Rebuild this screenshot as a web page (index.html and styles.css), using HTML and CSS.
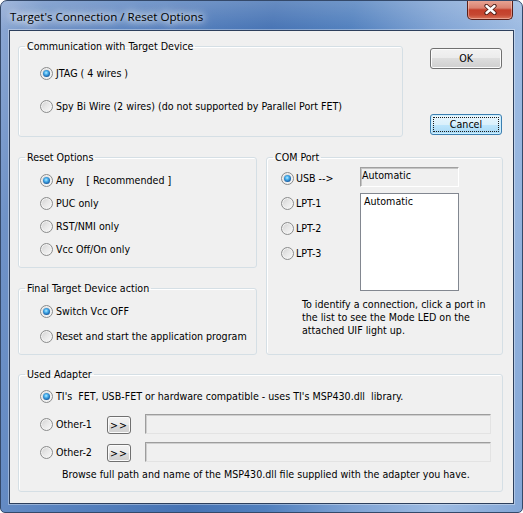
FILE: index.html
```html
<!DOCTYPE html>
<html>
<head>
<meta charset="utf-8">
<title>Target's Connection / Reset Options</title>
<link rel="stylesheet" href="styles.css">
</head>
<body>
<div class="window">
  <div class="titlebar">
    <div class="title">Target's Connection / Reset Options</div>
    <div class="close">
      <svg width="13" height="11" viewBox="0 0 13 11">
        <path d="M2.5 2 L10.5 9 M10.5 2 L2.5 9" stroke="#4a1c16" stroke-width="4.2" stroke-linecap="round" fill="none"/>
        <path d="M2.5 2 L10.5 9 M10.5 2 L2.5 9" stroke="#ffffff" stroke-width="2.4" stroke-linecap="round" fill="none"/>
      </svg>
    </div>
  </div>
  <div class="client">
    <div class="row-top">
      <fieldset class="group g-comm">
        <legend>Communication with Target Device</legend>
        <div class="comm-body">
          <div class="opt"><span class="radio on"></span>JTAG ( 4 wires )</div>
          <div class="opt"><span class="radio"></span>Spy Bi Wire (2 wires) (do not supported by Parallel Port FET)</div>
        </div>
      </fieldset>
      <div class="buttons">
        <div class="btn">OK</div>
        <div class="btn default">Cancel</div>
      </div>
    </div>
    <div class="row-mid">
      <div class="left-col">
        <fieldset class="group">
          <legend>Reset Options</legend>
          <div class="reset-body">
            <div class="opt"><span class="radio on"></span>Any<span class="rec">[ Recommended ]</span></div>
            <div class="opt"><span class="radio"></span>PUC only</div>
            <div class="opt"><span class="radio"></span>RST/NMI only</div>
            <div class="opt"><span class="radio"></span>Vcc Off/On only</div>
          </div>
        </fieldset>
        <fieldset class="group">
          <legend>Final Target Device action</legend>
          <div class="final-body">
            <div class="opt"><span class="radio on"></span>Switch Vcc OFF</div>
            <div class="opt"><span class="radio"></span>Reset and start the application program</div>
          </div>
        </fieldset>
      </div>
      <fieldset class="group g-com">
        <legend>COM Port</legend>
        <div class="com-body">
          <div class="com-top">
            <div class="com-radios">
              <div class="opt"><span class="radio on"></span>USB --&gt;</div>
              <div class="opt"><span class="radio"></span>LPT-1</div>
              <div class="opt"><span class="radio"></span>LPT-2</div>
              <div class="opt"><span class="radio"></span>LPT-3</div>
            </div>
            <div class="com-boxes">
              <div class="static-box">Automatic</div>
              <div class="listbox"><div class="item">Automatic</div></div>
            </div>
          </div>
          <p class="com-note">To identify a connection, click a port in<br>the list to see the Mode LED on the<br>attached UIF light up.</p>
        </div>
      </fieldset>
    </div>
    <fieldset class="group g-used">
      <legend>Used Adapter</legend>
      <div class="used-body">
        <div class="opt"><span class="radio on"></span>TI's&nbsp; FET, USB-FET or hardware compatible - uses TI's MSP430.dll&nbsp; library.</div>
        <div class="other first">
          <div class="opt other-opt"><span class="radio"></span>Other-1</div>
          <div class="sbtn">&gt;&gt;</div>
          <div class="edit"></div>
        </div>
        <div class="other second">
          <div class="opt other-opt"><span class="radio"></span>Other-2</div>
          <div class="sbtn">&gt;&gt;</div>
          <div class="edit"></div>
        </div>
        <div class="browse">Browse full path and name of the MSP430.dll file supplied with the adapter you have.</div>
      </div>
    </fieldset>
  </div>
</div>
</body>
</html>
```

FILE: styles.css
```css
html, body {
  margin: 0;
  padding: 0;
}
body {
  width: 523px;
  height: 513px;
  overflow: hidden;
  background: #ffffff;
  font-family: "DejaVu Sans Condensed", "DejaVu Sans", sans-serif;
  font-stretch: condensed;
  font-size: 10.6px;
  line-height: 13px;
  color: #000;
}
.window {
  box-sizing: border-box;
  width: 523px;
  height: 513px;
  border: 1px solid #34496a;
  border-radius: 7px 7px 5px 5px;
  overflow: hidden;
  display: flex;
  flex-direction: column;
  background:
    linear-gradient(to bottom, rgba(255,255,255,0.18), rgba(255,255,255,0) 30px),
    linear-gradient(100deg, #8ea9d4 0%, #6f92c7 7%, #5a84c0 22%, #4673b4 45%, #5180be 58%, #7fa3d4 72%, #9dbbe2 86%, #83a6d6 100%);
}
.titlebar {
  height: 29px;
  flex: none;
  display: flex;
  align-items: center;
}
.title {
  margin-left: 9px;
  font-family: "Open Sans", "Noto Sans", sans-serif;
  font-stretch: normal;
  font-size: 11.6px;
  line-height: 15px;
  color: #000;
  padding-top: 1px;
  text-shadow: 0 0 6px #fff, 0 0 10px #fff, 0 0 14px rgba(255,255,255,0.9);
}
.close {
  box-sizing: border-box;
  margin-left: auto;
  margin-right: 9px;
  align-self: flex-start;
  margin-top: -1px;
  width: 46px;
  height: 20px;
  border: 1px solid #5a1f17;
  border-top: none;
  border-radius: 0 0 5px 5px;
  background: linear-gradient(#e9a797 0%, #da8270 42%, #c43f2a 52%, #c64832 78%, #da765c 100%);
  box-shadow: inset 0 0 0 1px rgba(255,220,210,0.45);
  display: flex;
  align-items: center;
  justify-content: center;
}
.close svg {
  display: block;
}
.client {
  box-sizing: border-box;
  margin: 0 8px;
  height: 474px;
  flex: none;
  border: 1px solid #2d3f5c;
  box-shadow: 0 0 0 1px rgba(255,255,255,0.35);
  background: #f0f0f0;
  padding: 9px 10px 0 8px;
}

/* group boxes */
fieldset.group {
  margin: 0;
  padding: 0;
  min-width: 0;
  border: 1px solid #d5dfe5;
  border-radius: 3px;
  box-shadow: inset 1px 1px 0 #ffffff;
}
fieldset.group > legend {
  padding: 0 2px;
  margin-left: 6px;
  height: 13px;
  line-height: 13px;
}
.opt {
  display: flex;
  align-items: center;
  height: 13px;
  white-space: nowrap;
}
.radio {
  flex: none;
  position: relative;
  box-sizing: border-box;
  width: 13px;
  height: 13px;
  margin-right: 3px;
  border-radius: 50%;
  border: 1px solid #8b8c8c;
  background: linear-gradient(135deg, #cfcfcf 0%, #e6e6e6 45%, #f9f9f9 100%);
  box-shadow: inset 0 0 0 1px #f3f3f3;
}
.radio.on::after {
  content: "";
  position: absolute;
  left: 2px;
  top: 2px;
  width: 7px;
  height: 7px;
  border-radius: 50%;
  background: radial-gradient(circle at 45% 40%, #b9ebff 0%, #4eb4ef 30%, #1a64aa 68%, #0f3c73 100%);
}

/* top row */
.row-top {
  display: flex;
}
.g-comm {
  width: 385px;
  box-sizing: border-box;
}
.comm-body {
  display: flex;
  flex-direction: column;
  gap: 20px;
  padding: 14px 0 23px 21px;
}
.buttons {
  width: 72px;
  margin-left: 27px;
  padding-top: 8px;
  display: flex;
  flex-direction: column;
}
.btn {
  position: relative;
  box-sizing: border-box;
  height: 21px;
  border: 1px solid #707070;
  border-radius: 3px;
  background: linear-gradient(#f2f2f2 0%, #ebebeb 50%, #dddddd 50%, #cfcfcf 100%);
  box-shadow: inset 0 0 0 1px #fbfbfb;
  display: flex;
  align-items: center;
  justify-content: center;
}
.btn.default {
  margin-top: 45px;
  border-color: #3c7fb1;
  background: linear-gradient(#eaf6fd 0%, #d9f0fc 50%, #bee6fd 50%, #a7d9f5 100%);
  box-shadow: inset 0 0 0 1px #cdeefd;
}
.btn.default::after {
  content: "";
  position: absolute;
  inset: 2px;
  border: 1px dotted #1a1a1a;
  border-radius: 1px;
}

/* middle row */
.row-mid {
  display: flex;
  margin-top: 14px;
}
.left-col {
  width: 239px;
  display: flex;
  flex-direction: column;
  gap: 14px;
}
.reset-body {
  display: flex;
  flex-direction: column;
  gap: 10px;
  padding: 10px 0 11px 21px;
}
.rec {
  margin-left: 12px;
}
.final-body {
  display: flex;
  flex-direction: column;
  gap: 12px;
  padding: 10px 0 11px 21px;
}
.g-com {
  width: 237px;
  margin-left: 9px !important;
  box-sizing: border-box;
}
.g-com > legend {
  margin-left: 4px;
}
.com-top {
  display: flex;
}
.com-radios {
  width: 79px;
  padding: 8px 0 0 14px;
  display: flex;
  flex-direction: column;
  gap: 12px;
}
.com-radios .radio {
  margin-right: 2px;
}
.com-boxes {
  padding-top: 3px;
  display: flex;
  flex-direction: column;
  gap: 6px;
}
.static-box {
  box-sizing: border-box;
  width: 99px;
  height: 20px;
  padding: 1px 1px;
  border: 1px solid;
  border-color: #a0a0a0 #ffffff #ffffff #a0a0a0;
  box-shadow: inset 1px 1px 0 #c4c4c4;
  background: #f0f0f0;
}
.listbox {
  box-sizing: border-box;
  width: 99px;
  height: 98px;
  padding: 1px 3px;
  border: 1px solid #828790;
  background: #ffffff;
}
.com-note {
  margin: 7px 0 0 0;
  padding-left: 35px;
  white-space: nowrap;
}

/* used adapter */
.g-used {
  margin-top: 13px !important;
}
.used-body {
  display: flex;
  flex-direction: column;
  padding: 9px 0 10px 21px;
}
.other {
  display: flex;
  align-items: center;
  height: 20px;
}
.other.first {
  margin-top: 11px;
}
.other.second {
  margin-top: 8px;
}
.other-opt {
  width: 67px;
}
.sbtn {
  box-sizing: border-box;
  align-self: flex-end;
  width: 24px;
  height: 18px;
  border: 1px solid #707070;
  border-radius: 3px;
  background: linear-gradient(#f2f2f2 0%, #ebebeb 50%, #dddddd 50%, #cfcfcf 100%);
  box-shadow: inset 0 0 0 1px #fbfbfb;
  display: flex;
  align-items: center;
  justify-content: center;
  letter-spacing: 1px;
}
.edit {
  box-sizing: border-box;
  margin-left: 14px;
  width: 346px;
  height: 20px;
  border: 1px solid;
  border-color: #9d9d9d #e3e3e3 #e3e3e3 #9d9d9d;
  box-shadow: inset 1px 1px 0 #cfcfcf;
  background: #f0f0f0;
}
.browse {
  margin-top: 6px;
  margin-left: 22px;
  white-space: nowrap;
}
```
